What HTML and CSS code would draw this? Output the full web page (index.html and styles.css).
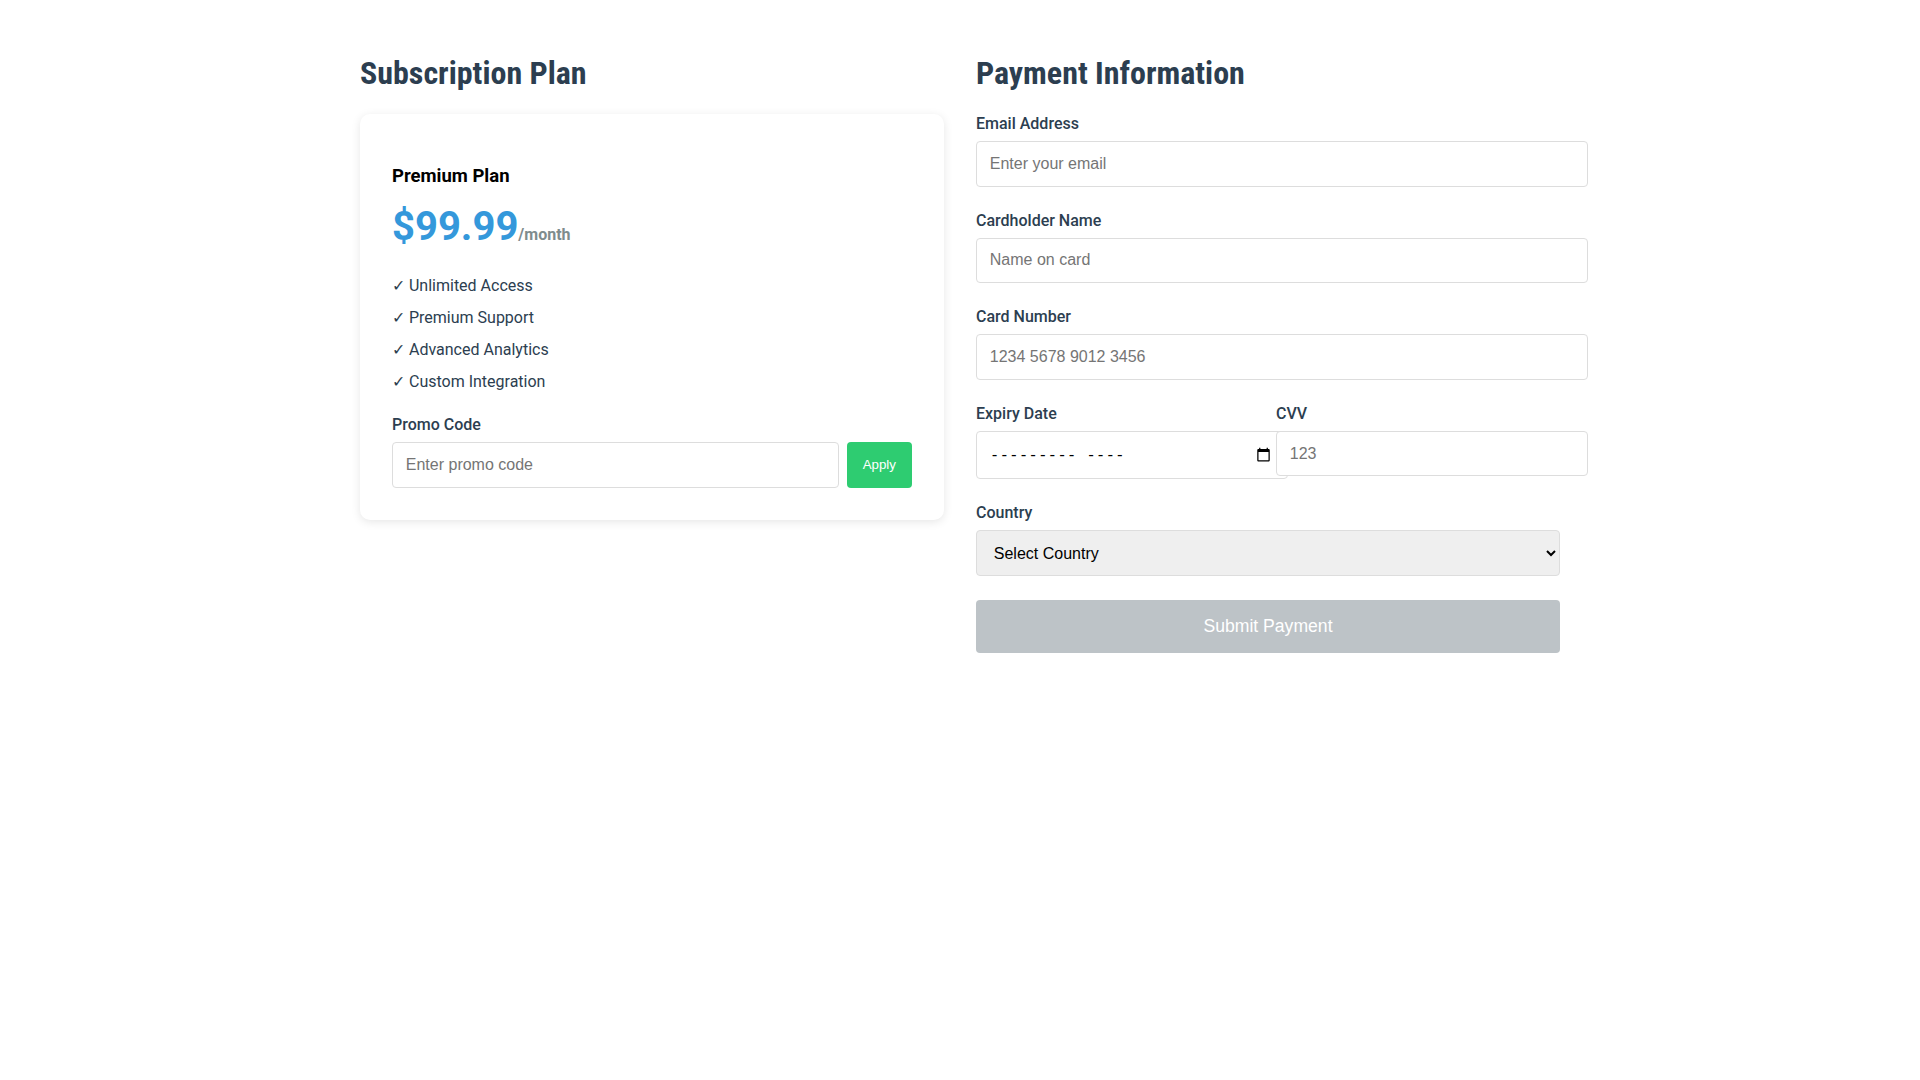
FILE: index.html
```html
<!doctype html>
<html>
<head>
    <meta charset="utf-8">
    <meta content="width=device-width,initial-scale=1" name="viewport">
    <title>Checkout</title>
    <link rel="stylesheet" href="styles.css">
</head>
<body>
<div class="checkout">
    <section class="plan">
        <h2>Subscription Plan</h2>
        <div class="card">
            <h3>Premium Plan</h3>
            <div class="price">$99.99<span class="per">/month</span></div>
            <ul class="features">
                <li>✓ Unlimited Access</li>
                <li>✓ Premium Support</li>
                <li>✓ Advanced Analytics</li>
                <li>✓ Custom Integration</li>
            </ul>
            <label for="promo">Promo Code</label>
            <div class="promo">
                <input id="promo" type="text" placeholder="Enter promo code">
                <button class="apply" type="button">Apply</button>
            </div>
        </div>
    </section>

    <section class="payment">
        <h2>Payment Information</h2>
        <form>
            <div class="group">
                <label for="email">Email Address</label>
                <input id="email" type="email" placeholder="Enter your email">
            </div>
            <div class="group">
                <label for="name">Cardholder Name</label>
                <input id="name" type="text" placeholder="Name on card">
            </div>
            <div class="group">
                <label for="card">Card Number</label>
                <input id="card" type="text" placeholder="1234 5678 9012 3456">
            </div>
            <div class="group row">
                <div class="field">
                    <label for="expiry">Expiry Date</label>
                    <input id="expiry" class="month" type="text" placeholder="--------- ----">
                    <svg class="cal" width="15" height="15" viewBox="0 0 24 24">
                        <path d="M20 3h-1V1h-2v2H7V1H5v2H4c-1.1 0-2 .9-2 2v16c0 1.1.9 2 2 2h16c1.1 0 2-.9 2-2V5c0-1.1-.9-2-2-2zm0 18H4V8h16v13z" fill="#000"/>
                    </svg>
                </div>
                <div class="field">
                    <label for="cvv">CVV</label>
                    <input id="cvv" type="text" placeholder="123">
                </div>
            </div>
            <div class="group">
                <label for="country">Country</label>
                <select id="country">
                    <option value="">Select Country</option>
                    <option value="us">United States</option>
                    <option value="uk">United Kingdom</option>
                    <option value="ca">Canada</option>
                </select>
            </div>
            <button class="submit" type="submit" disabled>Submit Payment</button>
        </form>
    </section>
</div>
</body>
</html>
```

FILE: styles.css
```css
body {
    margin: 0;
    font-family: Roboto, "Noto Sans", sans-serif;
    background: #ffffff;
    color: #2c3e50;
}

.checkout {
    max-width: 1200px;
    margin: 0 auto;
    padding-top: 54px;
    display: grid;
    grid-template-columns: 1fr 1fr;
    gap: 32px;
}

h2 {
    font-family: "Roboto Condensed", Roboto, sans-serif;
    font-size: 32px;
    font-weight: 700;
    line-height: 38px;
    margin: 0 0 22px;
    color: #2c3e50;
}

.card {
    background: #ffffff;
    border-radius: 10px;
    box-shadow: 0 2px 10px rgba(0, 0, 0, 0.1);
    padding: 32px;
}

h3 {
    font-size: 18.5px;
    font-weight: 700;
    line-height: 24px;
    margin: 18px 0 15px;
    color: #000000;
}

.price {
    font-size: 40px;
    font-weight: 700;
    line-height: 48px;
    color: #3498db;
    margin-bottom: 19px;
}

.per {
    font-size: 16px;
    line-height: 1;
    color: #7f8c8d;
}

.features {
    list-style: none;
    padding: 0;
    margin: 0 0 17px;
}

.features li {
    font-size: 16px;
    line-height: 32px;
}

label {
    display: block;
    font-size: 16px;
    font-weight: 500;
    line-height: 19px;
    margin-bottom: 8px;
    color: #2c3e50;
}

input {
    font-family: "Liberation Sans", Arial, sans-serif;
    font-size: 16px;
    padding: 12.8px;
    border: 1px solid #dddddd;
    border-radius: 4px;
    width: 100%;
    margin: 0;
    color: #000000;
}

.promo {
    display: flex;
    gap: 8px;
}

.promo input {
    flex: 1;
    width: auto;
    min-width: 0;
}

.apply {
    font-family: "Liberation Sans", Arial, sans-serif;
    font-size: 13.33px;
    background: #2ecc71;
    color: #ffffff;
    border: none;
    border-radius: 4px;
    padding: 0 16px;
}

.group {
    margin-bottom: 24px;
}

.row {
    display: grid;
    grid-template-columns: 1fr 1fr;
    gap: 16px;
}

.field {
    position: relative;
}

.month {
    font-family: "DejaVu Sans Mono", "Liberation Mono", monospace;
    height: 20.4px;
}

.month::placeholder {
    color: #000000;
}

.cal {
    position: absolute;
    left: 280px;
    top: 43.5px;
}

select {
    display: block;
    width: 100%;
    font-family: "Liberation Sans", Arial, sans-serif;
    font-size: 16px;
    padding: 12.8px;
    border: 1px solid #dddddd;
    border-radius: 4px;
    background-color: #efefef;
    color: #000000;
}

.submit {
    display: block;
    width: 100%;
    font-family: "Liberation Sans", Arial, sans-serif;
    font-size: 17.6px;
    padding: 16px;
    background: #bdc3c7;
    color: #ffffff;
    border: none;
    border-radius: 4px;
}
```
